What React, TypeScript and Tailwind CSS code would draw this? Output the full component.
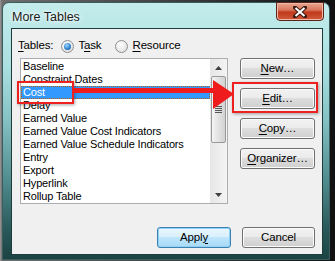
import React from 'react';

const items = [
  'Baseline',
  'Constraint Dates',
  'Cost',
  'Delay',
  'Earned Value',
  'Earned Value Cost Indicators',
  'Earned Value Schedule Indicators',
  'Entry',
  'Export',
  'Hyperlink',
  'Rollup Table',
];

function Radio({ checked }: { checked?: boolean }) {
  return (
    <span className="w-[13px] h-[13px] rounded-full border border-[#8f8f8f] bg-[radial-gradient(circle_at_40%_35%,#ffffff,#d8d8d8)] flex items-center justify-center">
      {checked && (
        <span className="w-[7px] h-[7px] rounded-full bg-[radial-gradient(circle_at_40%_35%,#9fd8ff,#1a6fc2_70%,#0e4f99)]" />
      )}
    </span>
  );
}

function Btn({ children, def }: { children: React.ReactNode; def?: boolean }) {
  return (
    <div
      className={`h-[21px] rounded-[3px] border flex items-center justify-center text-[11.5px] text-black ${
        def
          ? 'border-[#3c7fb1] bg-[linear-gradient(to_bottom,#eaf6fd_0%,#d9f0fc_45%,#bee6fd_50%,#a7d9f5_100%)] shadow-[inset_0_0_0_1px_#8fd2f5]'
          : 'border-[#707070] bg-[linear-gradient(to_bottom,#f2f2f2_0%,#ebebeb_45%,#dddddd_50%,#cfcfcf_100%)] shadow-[inset_0_0_0_1px_#fcfcfc]'
      }`}
    >
      {children}
    </div>
  );
}

export default function App() {
  return (
    <div
      className="w-[335px] h-[261px] overflow-hidden bg-[linear-gradient(to_right,#9a9a9a_0px,#6e6e6e_2px,#111111_330px)] pt-[2px] relative"
      style={{ fontFamily: '"Liberation Sans", Arial, sans-serif' }}
    >
      <div className="ml-[2px] w-[328px] h-[258px] rounded-t-[7px] border border-[#3b5d5f] bg-[linear-gradient(to_bottom,#c4ecec_0%,#aadfe0_25%,#86c3c4_45%,#4f8a8c_70%,#2a5a5b_88%,#1b4343_100%)] flex flex-col pl-[8px] pr-[6px] pb-[4px]">
        {/* title bar */}
        <div className="h-[25px] flex justify-between">
          <div className="pl-[1px] pt-[6px] text-[12.5px] text-[#1b1b1b] leading-[16px] [text-shadow:0_0_6px_#ffffff,0_0_3px_#ffffff]">
            More Tables
          </div>
          <div className="-mt-[1px] -mr-[1px] w-[48px] h-[19px] rounded-b-[4px] border border-[#5a2418] bg-[linear-gradient(to_bottom,#e9a791_0%,#d9785e_40%,#c2391c_55%,#cf5a3a_100%)] shadow-[inset_0_0_0_1px_#f0b8a6] flex items-center justify-center">
            <svg width="14" height="12" viewBox="0 0 14 12">
              <path d="M2 1.5 L12 10.5 M12 1.5 L2 10.5" stroke="#3a1a12" strokeWidth="4" strokeLinecap="square" />
              <path d="M2.5 2 L11.5 10 M11.5 2 L2.5 10" stroke="#ffffff" strokeWidth="2" />
            </svg>
          </div>
        </div>

        {/* client area */}
        <div className="flex-1 border border-[#1f3c3d] bg-[#f0f0f0] flex flex-col text-[11px] tracking-[-0.15px] text-black">
          <div className="h-[29px] pt-[5px] pl-[6px] flex items-center text-[11.5px]">
            <span>
              <span className="underline underline-offset-2">T</span>ables:
            </span>
            <span className="ml-[8px] flex items-center gap-[4px]">
              <Radio checked />
              <span>
                T<span className="underline underline-offset-2">a</span>sk
              </span>
            </span>
            <span className="ml-[14px] flex items-center gap-[4px]">
              <Radio />
              <span>
                <span className="underline underline-offset-2">R</span>esource
              </span>
            </span>
          </div>

          <div className="flex pl-[8px]">
            {/* listbox */}
            <div className="w-[208px] h-[146px] border border-[#abadb3] bg-white flex">
              <div className="flex-1 py-[1px]">
                {items.map((it) =>
                  it === 'Cost' ? (
                    <div key={it} className="h-[13px] leading-[11px] bg-[#3399ff] text-white pl-[1px] border border-dotted border-[#b0601a]">
                      {it}
                    </div>
                  ) : (
                    <div key={it} className="h-[13px] leading-[13px] pl-[2px] whitespace-nowrap">
                      {it}
                    </div>
                  )
                )}
              </div>
              {/* scrollbar */}
              <div className="w-[17px] bg-[linear-gradient(to_right,#e6e6e6,#f4f4f4)] flex flex-col items-center">
                <div className="h-[17px] w-full flex items-center justify-center">
                  <svg width="7" height="4" viewBox="0 0 7 4"><path d="M0 4 L3.5 0 L7 4 Z" fill="#404040" /></svg>
                </div>
                <div className="w-[15px] h-[67px] rounded-[2px] border border-[#9a9a9a] bg-[linear-gradient(to_right,#f4f4f4,#e2e2e2_50%,#d2d2d2)] flex flex-col items-center justify-center gap-[1px]">
                  <span className="w-[7px] h-[1px] bg-[#555]" />
                  <span className="w-[7px] h-[1px] bg-[#555]" />
                  <span className="w-[7px] h-[1px] bg-[#555]" />
                  <span className="w-[7px] h-[1px] bg-[#555]" />
                </div>
                <div className="flex-1" />
                <div className="h-[17px] w-full flex items-center justify-center">
                  <svg width="7" height="4" viewBox="0 0 7 4"><path d="M0 0 L3.5 4 L7 0 Z" fill="#404040" /></svg>
                </div>
              </div>
            </div>

            {/* side buttons */}
            <div className="ml-[12px] w-[75px] flex flex-col gap-[9px]">
              <Btn><span><span className="underline underline-offset-2">N</span>ew…</span></Btn>
              <Btn><span><span className="underline underline-offset-2">E</span>dit…</span></Btn>
              <Btn><span><span className="underline underline-offset-2">C</span>opy…</span></Btn>
              <Btn><span><span className="underline underline-offset-2">O</span>rganizer…</span></Btn>
            </div>
          </div>

          <div className="mt-[23px] flex justify-end gap-[11px] pr-[7px]">
            <div className="w-[74px]">
              <Btn def><span>Appl<span className="underline underline-offset-2">y</span></span></Btn>
            </div>
            <div className="w-[73px]">
              <Btn><span>Cancel</span></Btn>
            </div>
          </div>
        </div>
      </div>

      {/* red annotations */}
      <div className="absolute left-[17px] top-[81px] w-[57px] h-[23px] border-2 border-[#ee2020] shadow-[1px_1px_3px_rgba(0,0,0,0.35)]" />
      <div className="absolute left-[232px] top-[82px] w-[86px] h-[31px] border-2 border-[#ee2020] shadow-[1px_1px_3px_rgba(0,0,0,0.35)]" />
      <svg className="absolute left-[72px] top-[78px]" width="165" height="34" viewBox="0 0 165 34">
        <rect x="0" y="10" width="143" height="5" fill="#ee1c1c" />
        <path d="M141 2 L162 16 L141 31 Z" fill="#ee1c1c" />
      </svg>
    </div>
  );
}
